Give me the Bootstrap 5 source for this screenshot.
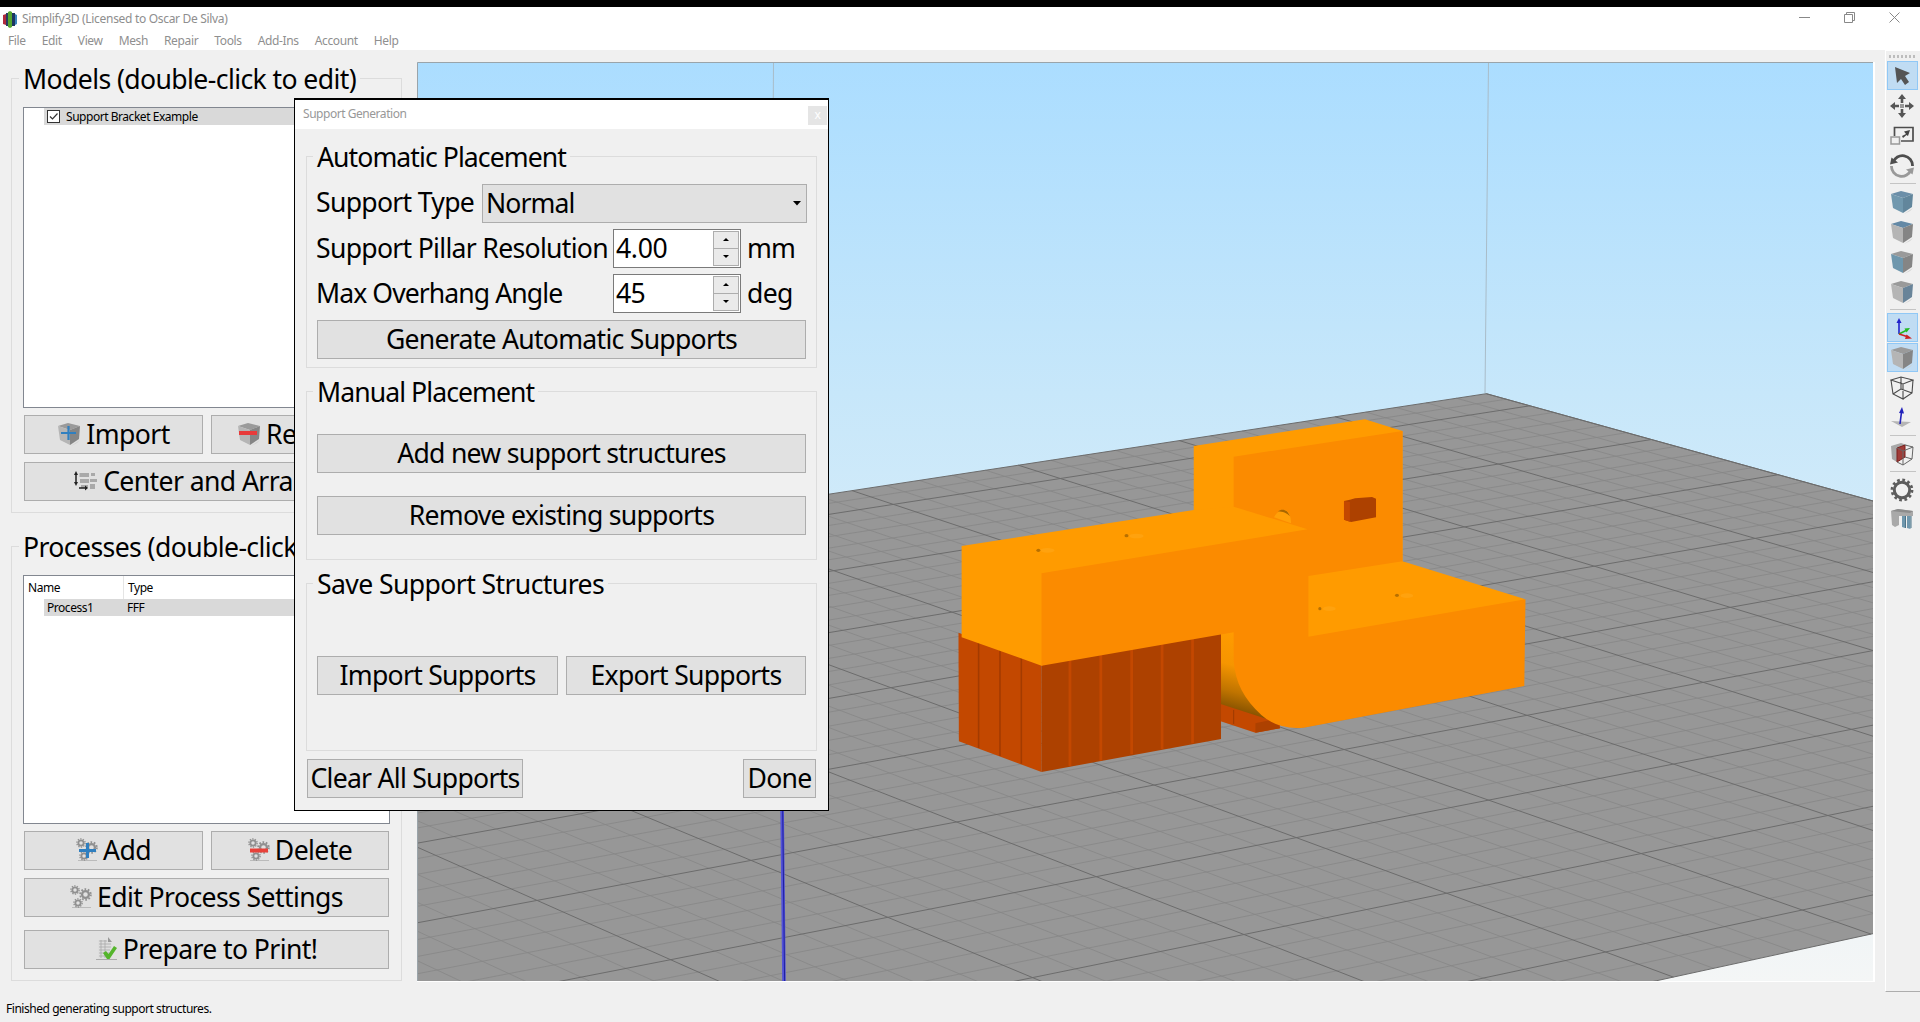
<!DOCTYPE html>
<html lang="en">
<head>
<meta charset="utf-8">
<title>Simplify3D</title>
<link href="https://cdn.jsdelivr.net/npm/bootstrap@5.3.0/dist/css/bootstrap.min.css" rel="stylesheet">
<style>
body{width:1920px;height:1022px;overflow:hidden;background:#f0f0f0;color:#000;font-family:"Noto Sans","Open Sans",sans-serif;font-size:12px;line-height:16px;letter-spacing:-.46px}
svg{display:block;flex:none}
.blackbar{height:7px;background:#000}
.titlebar{height:24px;color:#8e8e8e;padding-left:3px;letter-spacing:-.31px}
.winbtns{gap:34px;padding-right:20px;padding-top:1px}
.menubar{height:19px;color:#8f8f8f;padding-left:8px;gap:16px;letter-spacing:-.36px}
.workspace{height:942px}
.sidebar{width:417px;padding:28px 15px 0 11px}
.grp{border:1px solid #dcdcdc;width:391px}
.sidebar .grp{height:435px;margin-bottom:33px;padding:0 11px}
.cap,.big{font-size:26.6px;line-height:36px;letter-spacing:-.6px;white-space:nowrap}
.cap{width:max-content;margin:-18px 0 0 -4px;padding:0 4px;background:#f0f0f0;height:36px}
.big{letter-spacing:-.7px}
.narrow{letter-spacing:-.93px}
.listbox{background:#fff;border:1px solid #828790;width:367px}
.selrow{background:#d9d9d9;height:17px;margin-left:20px}
.wbtn{height:39px;background:#e1e1e1;border:1px solid #adadad;border-radius:0;padding:0 0 1px;font-size:26.6px;line-height:36px;letter-spacing:-.73px;color:#000;white-space:nowrap;display:flex;align-items:center;justify-content:center;gap:5px}
.sidebar .wbtn{letter-spacing:-.6px}
.hdr{height:23px}
.hdr .c1{width:100px;border-right:1px solid #e5e5e5}
.viewport{width:1458px;height:920px;margin-top:12px;border-right:2px solid #fff;border-bottom:1px solid #fff}
.toolstrip{width:35px;height:942px;margin-left:10px;border-left:1px solid #fff;border-top:1px solid #fff;border-bottom:1px solid #adadad;padding-top:4px}
.grip{width:28px;height:3px;margin:0 0 3px 3px;background:repeating-linear-gradient(90deg,#bdbdbd 0 2px,transparent 2px 4px)}
.tb{width:31px;height:30px;margin-left:1px;padding-right:1px}
.tb.on{background:#c0dcf3;border:1px solid #90c8f6;height:29px;margin-bottom:1px}
.tsep{height:6px;margin:0 4px}
.tsep::after{content:"";display:block;height:1px;background:#c4c4c4;position:relative;top:2px}
.dlg{position:absolute;left:294px;top:98px;width:535px;height:713px;background:#f0f0f0;border:1px solid #000;border-top-width:2px}
.dlg .head{height:29px;background:#fff;color:#989898;padding:0 1px 0 8px}
.xbtn{width:19px;height:19px;background:#e5e5e5;color:#fff;line-height:17px;margin-top:6px}
.dlg .grp{width:511px;margin-left:11px;padding:0 10px 0 10px}
.dlg .cap{margin-left:-4px}
.combo{width:325px;height:39px;background:#e1e1e1;border:1px solid #adadad;padding:0 5px 0 3px}
.combo .big,.spin .big{padding-bottom:2px}
.spin{width:128px;height:39px;background:#fff;border:1px solid #7a7a7a;padding:1px 1px 1px 2px}
.spin .ud{width:26px}
.ud div{height:17.5px;border:1px solid #adadad;background:#eaeaea;display:flex;align-items:center;justify-content:center}
.ud div+div{border-top:0}
.unit{padding-left:6px;padding-top:1px}
.lbl{width:297px;padding-top:1px}
</style>
<script src="https://cdn.jsdelivr.net/npm/bootstrap@5.3.0/dist/js/bootstrap.bundle.min.js"></script>
</head>
<body>
<svg width="0" height="0" style="position:absolute">
 <defs>
  <linearGradient id="sky" x1="0" y1="0" x2="0" y2="1"><stop offset="0" stop-color="#abddff"/><stop offset=".36" stop-color="#c7e7fa"/><stop offset="1" stop-color="#f4f6f6"/></linearGradient>
  <linearGradient id="undr" gradientUnits="userSpaceOnUse" x1="760" y1="700" x2="690" y2="925"><stop offset="0" stop-color="#ff9b00"/><stop offset=".38" stop-color="#f69500"/><stop offset=".7" stop-color="#c07400"/><stop offset="1" stop-color="#754800"/></linearGradient>
  <symbol id="cube" viewBox="0 0 24 24"><path d="M3 20L14 24L23 18L20 21L14 24Z" fill="#cfcfcf"/><path d="M1 4L11 1L23 4L13 8Z" fill="var(--t,#9a9a9a)"/><path d="M1 4L13 8V23L3 18Z" fill="var(--l,#b5b5b5)"/><path d="M13 8L23 4L22 17L13 23Z" fill="var(--r,#858585)"/></symbol>
  <symbol id="cog" viewBox="-8 -8 16 16"><circle r="4.2" fill="none" stroke="#909090" stroke-width="2.8"/><circle r="6.6" fill="none" stroke="#909090" stroke-width="2.2" stroke-dasharray="2.1 2.05"/></symbol>
  <symbol id="cogs" viewBox="0 0 22 24"><path d="M2 22.500H21" stroke="#bbb"/><use href="#cog" x="0" y="0" width="10" height="10"/><use href="#cog" x="9" y="3" width="13" height="13"/><use href="#cog" x="3" y="13" width="10" height="10"/></symbol>
 </defs>
</svg>
<div class="blackbar"></div>
<div class="titlebar bg-white d-flex align-items-center">
 <svg width="15" height="17" viewBox="0 0 15 17"><path d="M0 4L3 3V14L0 13Z" fill="#b02a3c"/><path d="M3 2H5V15H3Z" fill="#293b5f"/><path d="M5 1L7 0L9 1V16L7 17L5 16Z" fill="#55a630"/><path d="M9 2H12V15H9Z" fill="#1d3561"/><path d="M12 3L14 4V13L12 14Z" fill="#3a83bd"/></svg>
 <span class="ms-1 ps-0">Simplify3D (Licensed to Oscar De Silva)</span>
 <div class="winbtns ms-auto d-flex align-items-center mb-1">
  <svg width="11" height="11"><path d="M0 5.500H11" stroke="#888"/></svg>
  <svg width="11" height="11" fill="none" stroke="#888"><path d="M.5 2.500H8.500V10.500H.5ZM2.500 2.500V.5H10.500V8.500H8.500"/></svg>
  <svg width="11" height="11"><path d="M.5 .5L10.500 10.500M10.500 .5L.5 10.500" stroke="#888"/></svg>
 </div>
</div>
<div class="menubar bg-white d-flex align-items-center"><span>File</span><span>Edit</span><span>View</span><span>Mesh</span><span>Repair</span><span>Tools</span><span>Add-Ins</span><span>Account</span><span>Help</span></div>
<div class="workspace d-flex">
 <div class="sidebar">
  <div class="grp">
   <div class="cap">Models (double-click to edit)</div>
   <div class="listbox" style="height:301px;margin-top:10px">
    <div class="selrow d-flex align-items-center"><svg width="14" height="14" style="margin:0 5px 0 3px"><rect x=".5" y=".5" width="12" height="12" fill="#fff" stroke="#333"/><path d="M3 6.500L5.500 9L10.500 3.500" fill="none" stroke="#333" stroke-width="1.2"/></svg><span>Support Bracket Example</span></div>
   </div>
   <div class="d-flex gap-2" style="padding:0 1px;margin-top:7px">
    <button class="btn wbtn" style="width:179px"><svg width="24" height="24" viewBox="0 0 24 24"><use href="#cube" width="24" height="24"/><path d="M4 11H19M11.500 4V18" stroke="#2f7fc0" stroke-width="2.200"/></svg>Import</button>
    <button class="btn wbtn" style="width:178px"><svg width="24" height="24" viewBox="0 0 24 24"><use href="#cube" width="24" height="24"/><path d="M2 11H20" stroke="#e83a3a" stroke-width="4"/></svg>Remove</button>
   </div>
   <button class="btn wbtn mt-2" style="width:365px;margin-left:1px"><svg width="24" height="20" viewBox="0 0 24 20"><path d="M5.500 2H15V6H5.500ZM6 8H15V12H6ZM17 2H21V5H17ZM16 8H23V11H16ZM7 14H14V17H7ZM16 13H21V18H16Z" fill="#a9a9a9"/><path d="M2 2V13M5 17H13" stroke="#222" stroke-width="1.500"/><path d="M0 4L2 0L4 4ZM0 11L2 15L4 11ZM11 14.500L14 17L11 19.500Z" fill="#222"/></svg>Center and Arrange</button>
  </div>
  <div class="grp">
   <div class="cap">Processes (double-click to edit)</div>
   <div class="listbox" style="height:249px;margin-top:10px">
    <div class="hdr d-flex align-items-center"><div class="c1 h-100 d-flex align-items-center ps-1">Name</div><div class="ps-1">Type</div></div>
    <div class="selrow d-flex align-items-center"><span style="width:80px;padding-left:3px">Process1</span><span style="padding-left:3px">FFF</span></div>
   </div>
   <div class="d-flex gap-2" style="padding:0 1px;margin-top:7px">
    <button class="btn wbtn" style="width:179px"><svg width="22" height="24" viewBox="0 0 22 24"><use href="#cogs" width="22" height="24"/><path d="M3 12.500H20M11.500 5V20" stroke="#2f7fc0" stroke-width="3"/></svg>Add</button>
    <button class="btn wbtn" style="width:178px"><svg width="22" height="24" viewBox="0 0 22 24"><use href="#cogs" width="22" height="24"/><path d="M2 12.500H20" stroke="#e8423a" stroke-width="4"/></svg>Delete</button>
   </div>
   <button class="btn wbtn mt-2" style="width:365px;margin-left:1px"><svg width="22" height="24"><use href="#cogs" width="22" height="24"/></svg>Edit Process Settings</button>
   <button class="btn wbtn" style="width:365px;margin:13px 0 0 1px"><svg width="22" height="24" viewBox="0 0 22 24"><path d="M2 3H12L16 7V22H2Z" fill="#dedede"/><path d="M3 4H11M3 7H15M3 10H15M3 13H14M3 16H13M3 19H14M5 3V21M9 3V21" stroke="#aaa" stroke-width=".8"/><path d="M12 0L16 5H12Z" fill="#999"/><path d="M0 22.500H21" stroke="#aaa"/><path d="M7 16L10 14L12.500 17L18 9L21 11L13.500 22H11Z" fill="#55b52c"/></svg>Prepare to Print!</button>
  </div>
 </div>
 <svg class="viewport" viewBox="417 62 1456 919" preserveAspectRatio="none">
  <rect x="417" y="62" width="1456" height="919" fill="url(#sky)"/>
  <path d="M773.500 62L772 300M1488.500 62L1485 393" stroke="#a9bcc8" fill="none"/>
  <g id="bed"></g>
  <path d="M782 800L784 981" stroke="#5252d8" stroke-width="3.600"/><path d="M782.600 800L784.600 981" stroke="#1f1fa0" stroke-width="1"/>
  <g transform="translate(930 400) scale(.3954 .3333)">
   <path d="M735 900L885 960V985L823 998L735 964Z" fill="#c34800"/><path d="M823 970L870 958L886 985L823 998Z" fill="#ad4100"/><path d="M768 930V972" stroke="#8f3600" stroke-width="2"/>
   <path d="M735 690H800V870L860 960L735 912Z" fill="url(#undr)"/>
   <path d="M667 138L1100 58L1195 93V484L1506 598L1000 800L800 690L667 340Z" fill="#ff9b00"/>
   <path d="M72 698L282 790V1116L73 1024Z" fill="#c34800"/>
   <path d="M282 790L736 690V1017L282 1116Z" fill="#ad4100"/>
   <path d="M123 720V1044M177 745V1068M231 768V1091" stroke="#a33b00" stroke-width="4"/>
   <path d="M354 770V1098M432 760V1082M510 740V1063M587 725V1047M664 710V1030" stroke="#c34800" stroke-width="7"/>
   <path d="M80 438L667 330L768 320L955 388L282 797L80 712Z" fill="#ff9b00"/>
   <path d="M768 170L1195 93V484L957 528V710L1506 598L1503 858L945 983Q880 990 838 945C795 898 772 850 768 780V697L282 797V520L955 388L768 320Z" fill="#fb8b00"/>
   <path d="M1047 303L1062 299L1075 295L1118 291L1128 296V352L1065 366L1047 359Z" fill="#ad4100"/><path d="M1047 303L1062 306V365L1047 359Z" fill="#c34800"/>
   <path d="M870 352C876 336 888 328 897 330C908 333 913 350 913 370Z" fill="#ffa008"/><path d="M880 334C890 325 905 328 910 349C902 338 892 335 880 334Z" fill="#a86700"/>
   <g fill="#ffa20e"><ellipse cx="297" cy="451" rx="18" ry="7"/><ellipse cx="522" cy="408" rx="18" ry="7"/><ellipse cx="1010" cy="626" rx="16" ry="7"/><ellipse cx="1206" cy="587" rx="16" ry="7"/></g>
   <g fill="#b87000"><ellipse cx="274" cy="451" rx="5" ry="5"/><ellipse cx="497" cy="407" rx="5" ry="5"/><ellipse cx="986" cy="626" rx="4" ry="5"/><ellipse cx="1181" cy="586" rx="5" ry="5"/></g>
  </g>
  <path d="M417.500 981V62.500H1873" fill="none" stroke="#9aa4aa"/>
 </svg>
 <div class="toolstrip">
  <div class="grip"></div>
  <div class="tb on d-flex align-items-center justify-content-center"><svg width="24" height="24"><path d="M5 3L20 9L15 12L19 18L15 21L11 15L7 19Z" fill="#555"/></svg></div>
  <div class="tb d-flex align-items-center justify-content-center"><svg width="24" height="24" fill="#555"><rect x="10" y="10" width="4" height="4" fill="#999"/><path d="M12 0L16 5H13.300V9H10.700V5H8ZM12 24L8 19H10.700V15H13.300V19H16ZM0 12L5 8V10.700H9V13.300H5V16ZM24 12L19 16V13.300H15V10.700H19V8Z"/></svg></div>
  <div class="tb d-flex align-items-center justify-content-center"><svg width="24" height="24"><path d="M4.500 12V3.500H23V17H11" fill="none" stroke="#4d4d4d" stroke-width="1.700"/><rect x="1" y="13" width="8.500" height="7" fill="none" stroke="#999" stroke-width="1.500"/><path d="M12 12L16 10L14 7.500L20 6L18 12L16.500 11L13 14Z" fill="#444"/></svg></div>
  <div class="tb d-flex align-items-center justify-content-center"><svg width="24" height="24" fill="none" stroke-width="2.800"><path d="M3 8.500A10 10 0 0 1 22.500 12" stroke="#4e4e4e"/><path d="M21 15.500A10 10 0 0 1 1.500 12" stroke="#999"/><path d="M0 10.500L1.500 3.500L8 8.500Z" fill="#4e4e4e"/><path d="M24 13.500L22.500 20.500L16 15.500Z" fill="#999"/></svg></div>
  <div class="tsep"></div>
  <div class="tb d-flex align-items-center justify-content-center" style="--t:#6b8ea8;--l:#7198ae;--r:#62869c"><svg width="24" height="24"><use href="#cube"/></svg></div>
  <div class="tb d-flex align-items-center justify-content-center" style="--t:#6489a6"><svg width="24" height="24"><use href="#cube"/></svg></div>
  <div class="tb d-flex align-items-center justify-content-center" style="--l:#6f97ad"><svg width="24" height="24"><use href="#cube"/></svg></div>
  <div class="tb d-flex align-items-center justify-content-center" style="--r:#698499"><svg width="24" height="24"><use href="#cube"/></svg></div>
  <div class="tsep"></div>
  <div class="tb on d-flex align-items-center justify-content-center"><svg width="24" height="24"><path d="M9 18V6" stroke="#22c" stroke-width="1.600"/><path d="M6.500 7L9 2L11.500 7Z" fill="#22c"/><path d="M9 18L16 14.500" stroke="#2b2" stroke-width="1.600"/><path d="M14.500 12.500L20 12L16.500 16.500Z" fill="#2b2"/><path d="M9 18L17 20.500" stroke="#c22" stroke-width="1.600"/><path d="M16.500 18.500L22 22.500L15 23Z" fill="#c22"/></svg></div>
  <div class="tb on d-flex align-items-center justify-content-center"><svg width="24" height="24"><use href="#cube"/></svg></div>
  <div class="tb d-flex align-items-center justify-content-center"><svg width="24" height="24" fill="none" stroke="#4a4a4a" stroke-width="1.100"><path d="M1 4L11 1L23 4L13 8ZM1 4L3 18L13 23V8M23 4L22 17L13 23M11 1V13L3 18M11 13L22 17"/></svg></div>
  <div class="tb d-flex align-items-center justify-content-center"><svg width="24" height="24"><path d="M1 15L21 16L12 21Z" fill="#b5b5b5"/><path d="M10 18L11.500 6" stroke="#22b" stroke-width="1.600"/><path d="M9 7L12 1L14 7.500Z" fill="#22b"/></svg></div>
  <div class="tsep"></div>
  <div class="tb d-flex align-items-center justify-content-center"><svg width="24" height="24"><path d="M1 4L11 1L17 3L7 6V20L2 17Z" fill="#a8a8a8"/><path d="M7 6L15 3V15L7 20Z" fill="#a03c38" stroke="#7a1f1c"/><path d="M15 3L23 5L13 9V23L22 17L23 5M7 20L13 23M15 15L22 17M7 6L13 9" fill="none" stroke="#666"/></svg></div>
  <div class="tsep"></div>
  <div class="tb d-flex align-items-center justify-content-center"><svg width="24" height="24" viewBox="-12 -12 24 24" fill="none" stroke="#5c5c5c"><circle r="7.700" stroke-width="3"/><circle r="10" stroke-width="2.800" stroke-dasharray="2.700 2.536"/></svg></div>
  <div class="tb d-flex align-items-center justify-content-center"><svg width="24" height="24"><path d="M1 3L8 1L23 3V8H9V17L5 19L2 17Z" fill="#a9a9a9"/><path d="M1 3L8 1L23 3L20 5Z" fill="#8c8c8c"/><path d="M12 8H15V20L12 19ZM17 8H20.500V21L17 20Z" fill="#6f97ad"/><path d="M15 8H16V20H15ZM20.500 8H21.500V20H20.500Z" fill="#4f7488"/></svg></div>
 </div>
</div>
<div class="px-2" style="padding-top:9px"><span style="margin-left:-2px">Finished generating support structures.</span></div>

<div class="dlg">
 <div class="head d-flex"><span style="padding-top:6px">Support Generation</span><span class="xbtn ms-auto text-center">x</span></div>
 <div class="grp" style="height:212px;margin-top:27px">
  <div class="cap narrow">Automatic Placement</div>
  <div class="d-flex justify-content-between" style="margin:9px -1px 0 -1px"><span class="big">Support Type</span><div class="combo d-flex align-items-center justify-content-between"><span class="big narrow">Normal</span><svg width="8" height="5"><path d="M0 0H8L4 4.500Z"/></svg></div></div>
  <div class="d-flex" style="margin:6px 0 0 -1px"><span class="big lbl">Support Pillar Resolution</span><div class="spin d-flex align-items-center justify-content-between"><span class="big" style="letter-spacing:-.35px">4.00</span><div class="ud"><div><svg width="6" height="3"><path d="M0 3L3 0L6 3Z"/></svg></div><div><svg width="6" height="3"><path d="M0 0L3 3L6 0Z"/></svg></div></div></div><span class="big unit narrow">mm</span></div>
  <div class="d-flex" style="margin:6px 0 0 -1px"><span class="big lbl narrow">Max Overhang Angle</span><div class="spin d-flex align-items-center justify-content-between"><span class="big">45</span><div class="ud"><div><svg width="6" height="3"><path d="M0 3L3 0L6 3Z"/></svg></div><div><svg width="6" height="3"><path d="M0 0L3 3L6 0Z"/></svg></div></div></div><span class="big unit">deg</span></div>
  <button class="btn wbtn w-100" style="margin-top:7px">Generate Automatic Supports</button>
 </div>
 <div class="grp" style="height:169px;margin-top:23px">
  <div class="cap narrow">Manual Placement</div>
  <button class="btn wbtn w-100" style="margin-top:24px">Add new support structures</button>
  <button class="btn wbtn w-100" style="margin-top:23px">Remove existing supports</button>
 </div>
 <div class="grp" style="height:168px;margin-top:23px">
  <div class="cap">Save Support Structures</div>
  <div class="d-flex gap-2" style="margin-top:54px"><button class="btn wbtn" style="width:241px">Import Supports</button><button class="btn wbtn" style="width:240px">Export Supports</button></div>
 </div>
 <div class="d-flex justify-content-between" style="padding:8px 12px 0"><button class="btn wbtn" style="width:216px">Clear All Supports</button><button class="btn wbtn" style="width:73px">Done</button></div>
</div>
<script>
// Bed plane: fit a perspective map from grid units to the view, then draw the grid.
const pts=[[1,2,1501,464.2],[1,4,1754.3,538.2],[3,7,1853,729.6],[5,8,1641,853.9],[6,9,1604.3,952.5],[2,3,1464.7,527.3],
[6,7,1297,837.4],[7,6,956.8,821.4],[8,7,887.3,917],[9,6,538.3,900.7],[8,6,750.7,860],[9,7,670,959.7],[1,.63,1336,416.7],[2,.63,1180,440],[3,.63,1018,465.7],[0,.63,1484.5,393.7],[0,3,1777.3,474.3],[4.13,.63,829,494.5]];
const M=Array.from({length:8},()=>Array(9).fill(0));
for(const [u,v,x0,y0] of pts){const x=(x0-1100)/500,y=(y0-700)/500;
 for(const r of [[u,v,1,0,0,0,-u*x,-v*x,x],[0,0,0,u,v,1,-u*y,-v*y,y]])
  for(let i=0;i<8;i++)for(let j=0;j<9;j++)M[i][j]+=r[i]*r[j];}
for(let i=0;i<8;i++){let p=i;for(let k=i;k<8;k++)if(Math.abs(M[k][i])>Math.abs(M[p][i]))p=k;[M[i],M[p]]=[M[p],M[i]];
 for(let k=0;k<8;k++)if(k!==i){const f=M[k][i]/M[i][i];for(let j=i;j<9;j++)M[k][j]-=f*M[i][j];}}
const h=M.map((r,i)=>r[8]/r[i]);
const P=(u,v)=>{const w=h[6]*u+h[7]*v+1;return ((h[0]*u+h[1]*v+h[2])/w*500+1100).toFixed(1)+' '+((h[3]*u+h[4]*v+h[5])/w*500+700).toFixed(1)};
const U=10,V0=.63,V1=9.41;let minor='',major='';
for(let i=0;i<=U*5;i++){const s=`M${P(i/5,V0)}L${P(i/5,V1)}`;i%5?minor+=s:major+=s;}
for(let j=4;j<=46;j++){const s=`M${P(0,j/5)}L${P(U,j/5)}`;j%5?minor+=s:major+=s;}
const edge=`M${P(0,V0)}L${P(U,V0)}L${P(U,V1)}L${P(0,V1)}Z`;
document.getElementById('bed').innerHTML=`<path d="${edge}" fill="#979797"/><path d="${minor}" stroke="#868686" stroke-width=".8" fill="none"/><path d="${major}${edge}" stroke="#6c6c6c" fill="none"/>`;
</script>
</body>
</html>
